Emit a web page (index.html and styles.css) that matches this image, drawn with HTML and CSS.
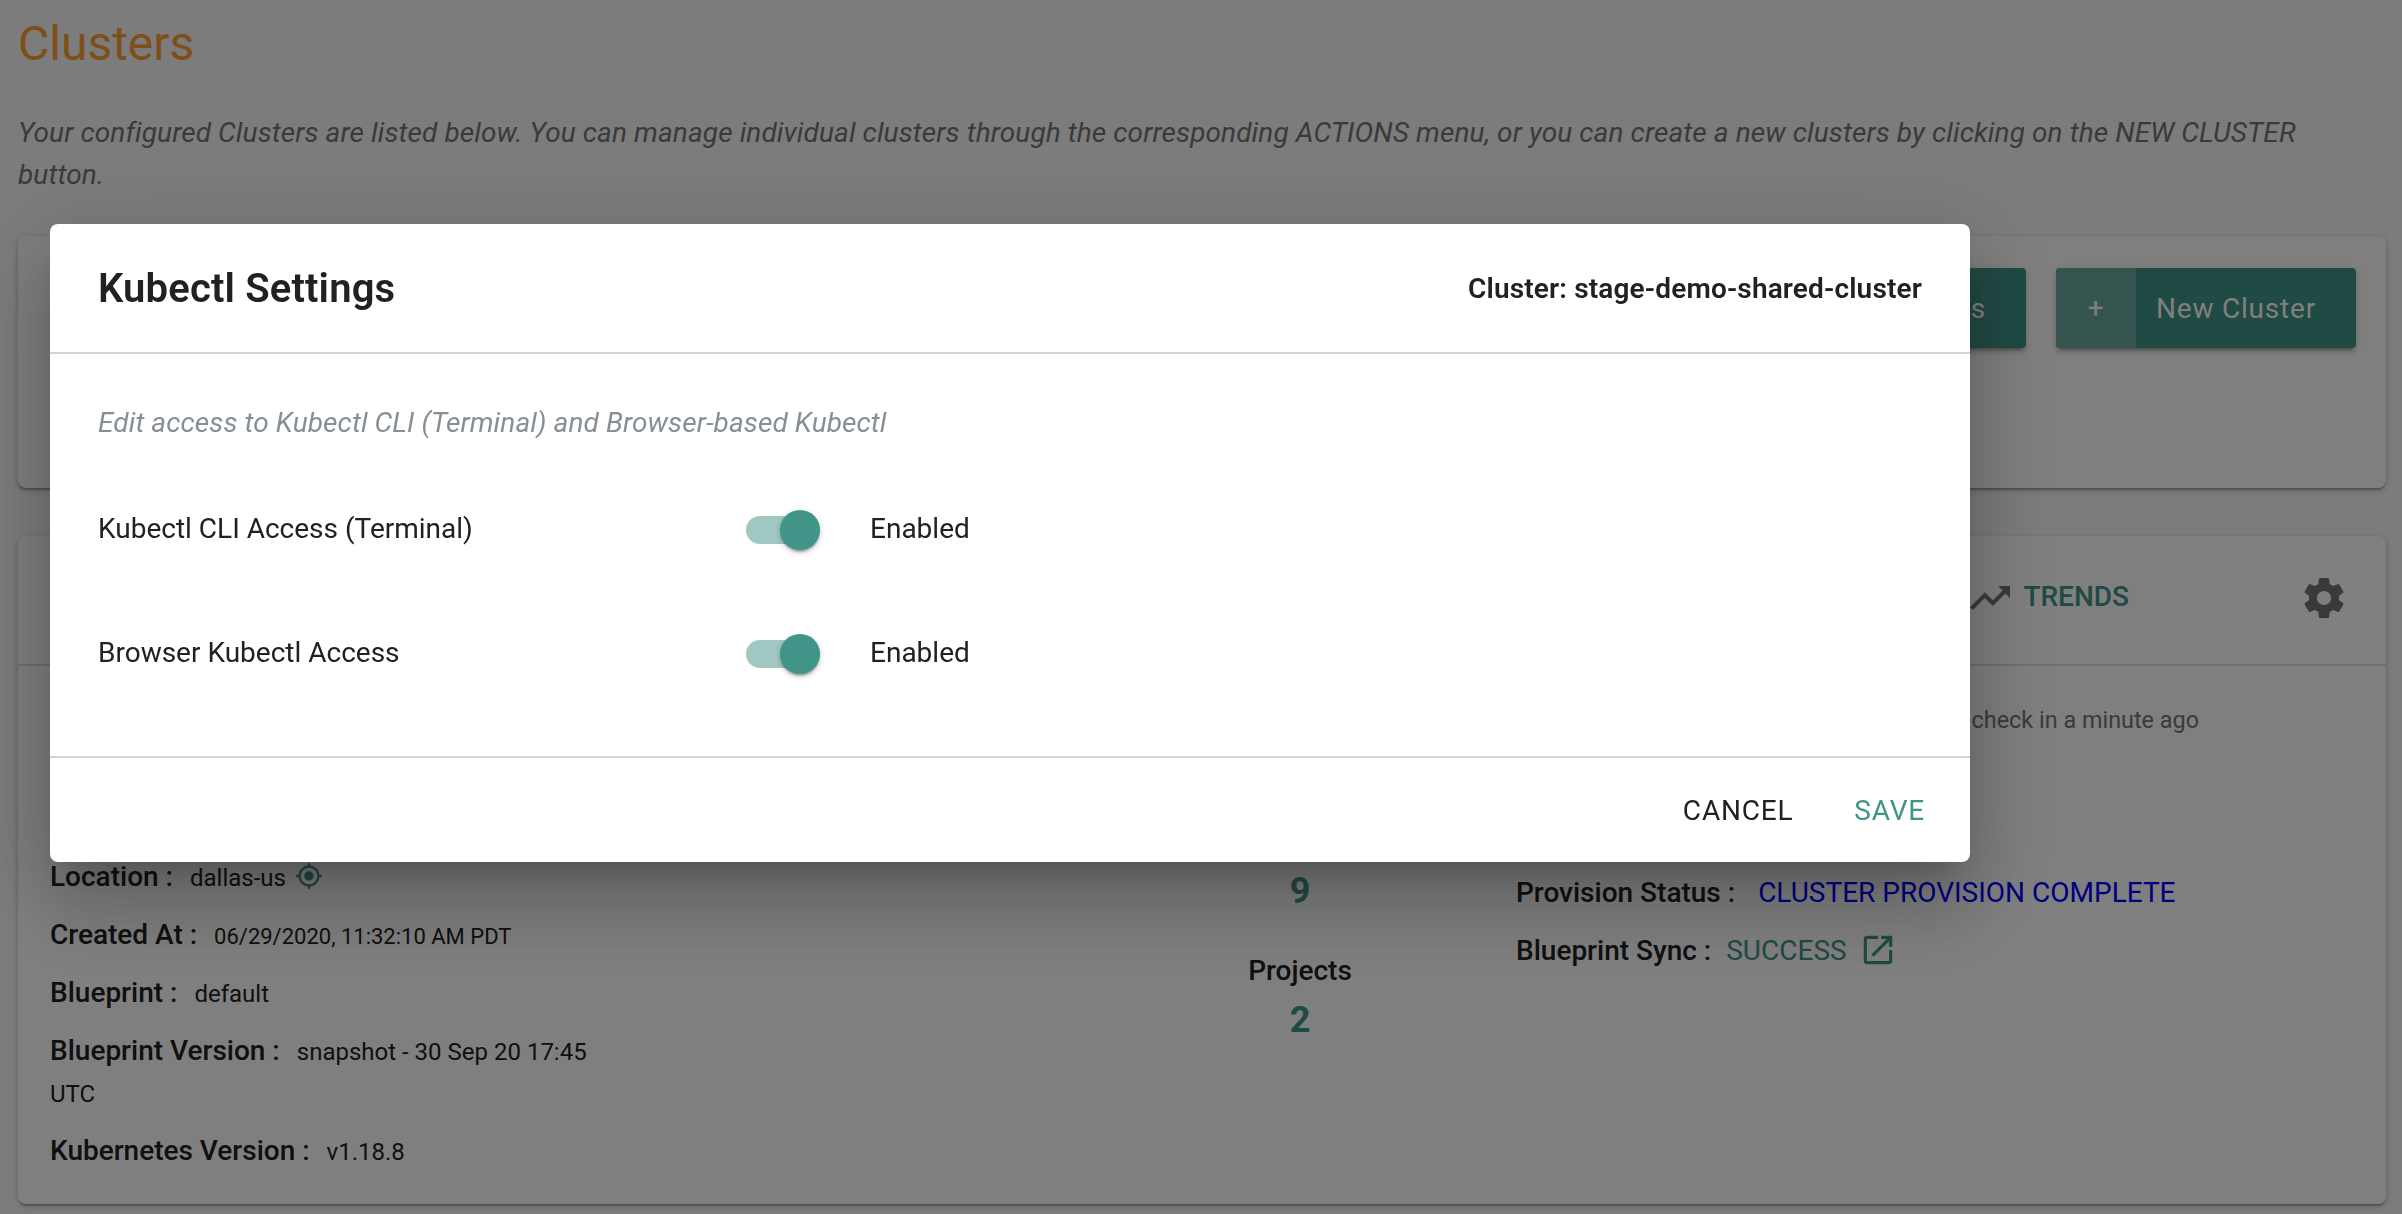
FILE: index.html
```html
<!DOCTYPE html>
<html lang="en">
<head>
<meta charset="utf-8">
<title>Clusters</title>
<link rel="stylesheet" href="styles.css">
</head>
<body>
<main class="page">
  <h1 class="page-title">Clusters</h1>
  <p class="page-intro">Your configured Clusters are listed below. You can manage individual clusters through the corresponding ACTIONS menu, or you can create a new clusters by clicking on the NEW CLUSTER button.</p>

  <section class="card toolbar">
    <button class="btn"><span class="btn-label">s</span></button>
    <button class="btn"><span class="btn-icon">+</span><span class="btn-label">New Cluster</span></button>
  </section>

  <section class="card cluster">
    <header class="cluster-head">
      <a class="trends">
        <svg class="icon" viewBox="0 0 24 24"><path d="M16 6l2.29 2.29-4.88 4.88-4-4L2 16.59 3.41 18l6-6 4 4 6.3-6.29L22 12V6z"/></svg>
        <span>TRENDS</span>
      </a>
      <svg class="icon" viewBox="0 0 24 24"><path d="M19.43 12.98c.04-.32.07-.64.07-.98s-.03-.66-.07-.98l2.11-1.65c.19-.15.24-.42.12-.64l-2-3.46c-.12-.22-.39-.3-.61-.22l-2.49 1c-.52-.4-1.08-.73-1.69-.98l-.38-2.65C14.46 2.18 14.25 2 14 2h-4c-.25 0-.46.18-.49.42l-.38 2.65c-.61.25-1.17.59-1.69.98l-2.49-1c-.23-.09-.49 0-.61.22l-2 3.46c-.13.22-.07.49.12.64l2.11 1.65c-.04.32-.07.65-.07.98s.03.66.07.98l-2.11 1.65c-.19.15-.24.42-.12.64l2 3.46c.12.22.39.3.61.22l2.49-1c.52.4 1.08.73 1.69.98l.38 2.65c.03.24.24.42.49.42h4c.25 0 .46-.18.49-.42l.38-2.65c.61-.25 1.17-.59 1.69-.98l2.49 1c.23.09.49 0 .61-.22l2-3.46c.12-.22.07-.49-.12-.64l-2.11-1.65zM12 15.5c-1.93 0-3.5-1.57-3.5-3.5s1.57-3.5 3.5-3.5 3.5 1.57 3.5 3.5-1.57 3.5-3.5 3.5z"/></svg>
    </header>
    <div class="cluster-body">
      <div class="details">
        <div class="detail"><b>Location :</b><span class="value">dallas-us</span><svg class="pin" viewBox="0 0 24 24"><path d="M12 8c-2.21 0-4 1.79-4 4s1.79 4 4 4 4-1.79 4-4-1.79-4-4-4zm8.94 3c-.46-4.17-3.77-7.48-7.94-7.94V1h-2v2.06C6.83 3.52 3.52 6.83 3.06 11H1v2h2.06c.46 4.17 3.77 7.48 7.94 7.94V23h2v-2.06c4.17-.46 7.48-3.77 7.94-7.94H23v-2h-2.06zM12 19c-3.87 0-7-3.13-7-7s3.13-7 7-7 7 3.13 7 7-3.13 7-7 7z"/></svg></div>
        <div class="detail"><b>Created At :</b><span class="value date">06/29/2020, 11:32:10 AM PDT</span></div>
        <div class="detail"><b>Blueprint :</b><span class="value">default</span></div>
        <div class="detail wrapped"><b>Blueprint Version :</b><span class="value">snapshot - 30 Sep 20 17:45 UTC</span></div>
        <div class="detail"><b>Kubernetes Version :</b><span class="value">v1.18.8</span></div>
      </div>
      <div class="counts">
        <strong class="count">9</strong>
        <b class="count-label">Projects</b>
        <strong class="count">2</strong>
      </div>
      <div class="statuses">
        <p class="checkin">check in a minute ago</p>
        <div class="detail"><b>Provision Status :</b><span class="provision">CLUSTER PROVISION COMPLETE</span></div>
        <div class="detail"><b>Blueprint Sync :</b><span class="sync">SUCCESS</span><svg class="open" viewBox="0 0 24 24"><path d="M19 19H5V5h7V3H5c-1.11 0-2 .9-2 2v14c0 1.1.89 2 2 2h14c1.1 0 2-.9 2-2v-7h-2v7zM14 3v2h3.59l-9.83 9.83 1.41 1.41L19 6.41V10h2V3h-7z"/></svg></div>
      </div>
    </div>
  </section>
</main>

<div class="backdrop">
  <div class="dialog">
    <header class="dialog-head">
      <h2 class="dialog-title">Kubectl Settings</h2>
      <span class="dialog-cluster">Cluster: stage-demo-shared-cluster</span>
    </header>
    <div class="dialog-body">
      <p class="dialog-hint">Edit access to Kubectl CLI (Terminal) and Browser-based Kubectl</p>
      <div class="setting"><span class="setting-name">Kubectl CLI Access (Terminal)</span><span class="switch"><span class="thumb"></span></span><span>Enabled</span></div>
      <div class="setting"><span class="setting-name">Browser Kubectl Access</span><span class="switch"><span class="thumb"></span></span><span>Enabled</span></div>
    </div>
    <footer class="dialog-foot">
      <button class="action">CANCEL</button>
      <button class="action primary">SAVE</button>
    </footer>
  </div>
</div>
</body>
</html>
```

FILE: styles.css
```css
* { box-sizing: border-box; }

body {
  margin: 0;
  height: 1214px;
  overflow: hidden;
  background: #f8f8f8;
  color: #212121;
  font: 400 28px/42px Roboto, "Liberation Sans", sans-serif;
}

h1, h2, p { margin: 0; font-weight: 400; }
b { font-weight: 500; }
button { border: 0; padding: 0; background: none; color: inherit; font: inherit; }

.page { padding: 14px 16px 0 18px; }
.page-title { color: #ff9e33; font-size: 48px; line-height: 60px; }
.page-intro {
  height: 124px;
  margin-top: 38px;
  color: #757575;
  font-style: italic;
  letter-spacing: .1px;
}

.card {
  border-radius: 8px;
  background: #fff;
  box-shadow: 0 2px 6px rgba(0, 0, 0, .2), 0 2px 2px rgba(0, 0, 0, .14), 0 4px 2px -2px rgba(0, 0, 0, .12);
}

.toolbar {
  display: flex;
  justify-content: flex-end;
  align-items: flex-start;
  gap: 30px;
  height: 252px;
  padding: 32px 30px;
}
.btn {
  display: flex;
  align-items: center;
  justify-content: flex-end;
  min-width: 280px;
  height: 80px;
  border-radius: 4px;
  background: #409488;
  color: #fff;
  letter-spacing: .8px;
  overflow: hidden;
  box-shadow: 0 6px 2px -4px rgba(0, 0, 0, .2), 0 4px 4px rgba(0, 0, 0, .14), 0 2px 10px rgba(0, 0, 0, .12);
}
.btn-icon { width: 80px; line-height: 82px; background: #6aa9a1; text-align: center; }
.btn-label { padding: 2px 40px 0 20px; }

.cluster { height: 668px; margin-top: 48px; }
.cluster-head {
  display: flex;
  justify-content: flex-end;
  align-items: center;
  gap: 171px;
  height: 130px;
  padding: 0 38px 6px 0;
  border-bottom: 2px solid #e0e0e0;
}
.icon { display: block; width: 48px; height: 48px; margin-top: 2px; fill: #757575; }
.trends { display: flex; align-items: center; gap: 9px; color: #409488; font-weight: 500; }

.cluster-body { display: grid; grid-template-columns: 1150px 200px 1fr; padding-left: 32px; }
.details { display: flex; flex-direction: column; gap: 16px; width: 560px; padding-top: 191px; }
.detail { height: 42px; font-size: 24px; }
.detail b, .provision, .sync { font-size: 28px; line-height: 33px; }
.wrapped { height: auto; }
.value { margin-left: 17px; }
.date { font-size: 22px; line-height: 26px; }
.pin { width: 28px; height: 28px; margin-left: 9px; fill: #409488; vertical-align: -4px; }
.counts { display: flex; flex-direction: column; align-items: center; padding-top: 204px; }
.count { color: #409488; font-size: 36px; font-weight: 700; }
.count-label { margin: 38px 0 7px; }
.statuses { display: flex; flex-direction: column; gap: 16px; padding: 33px 187px 0 116px; }
.checkin { margin-bottom: 116px; color: #757575; font-size: 23.4px; text-align: right; }
.provision { margin-left: 23px; color: #00f; }
.sync { margin-left: 15px; color: #409488; }
.open { width: 38px; height: 38px; margin: -10px 0 0 12px; fill: #409488; vertical-align: -9px; }

.backdrop { position: fixed; inset: 0; padding: 224px 0 0 50px; background: rgba(0, 0, 0, .5); }
.dialog {
  width: 1920px;
  height: 638px;
  border-radius: 8px;
  background: #fff;
  box-shadow: 0 22px 30px -14px rgba(0, 0, 0, .2), 0 48px 76px 6px rgba(0, 0, 0, .14), 0 18px 92px 16px rgba(0, 0, 0, .12);
}
.dialog-head {
  display: flex;
  justify-content: space-between;
  align-items: center;
  height: 130px;
  padding: 2px 48px 0;
  border-bottom: 2px solid #d3d3d3;
}
.dialog-title { font-size: 40px; font-weight: 600; letter-spacing: .16px; }
.dialog-cluster { font-weight: 600; letter-spacing: .16px; }
.dialog-body { height: 402px; padding: 48px 48px 0; }
.dialog-hint { color: #868e96; font-style: italic; letter-spacing: .1px; }
.setting { display: flex; align-items: center; height: 42px; margin-top: 64px; }
.setting + .setting { margin-top: 82px; }
.setting-name { width: 648px; }
.switch { width: 68px; height: 28px; margin: 2px 56px 0 0; border-radius: 14px; background: #a0c9c3; }
.thumb {
  display: block;
  width: 40px;
  height: 40px;
  margin: -6px 0 0 34px;
  border-radius: 50%;
  background: #409488;
  box-shadow: 0 2px 6px rgba(0, 0, 0, .2), 0 2px 2px rgba(0, 0, 0, .14), 0 4px 2px -2px rgba(0, 0, 0, .12);
}
.dialog-foot {
  display: flex;
  justify-content: flex-end;
  align-items: center;
  gap: 61px;
  height: 106px;
  padding: 2px 45px 0 0;
  border-top: 2px solid #d3d3d3;
}
.action { letter-spacing: .8px; }
.primary { color: #409488; }
```
